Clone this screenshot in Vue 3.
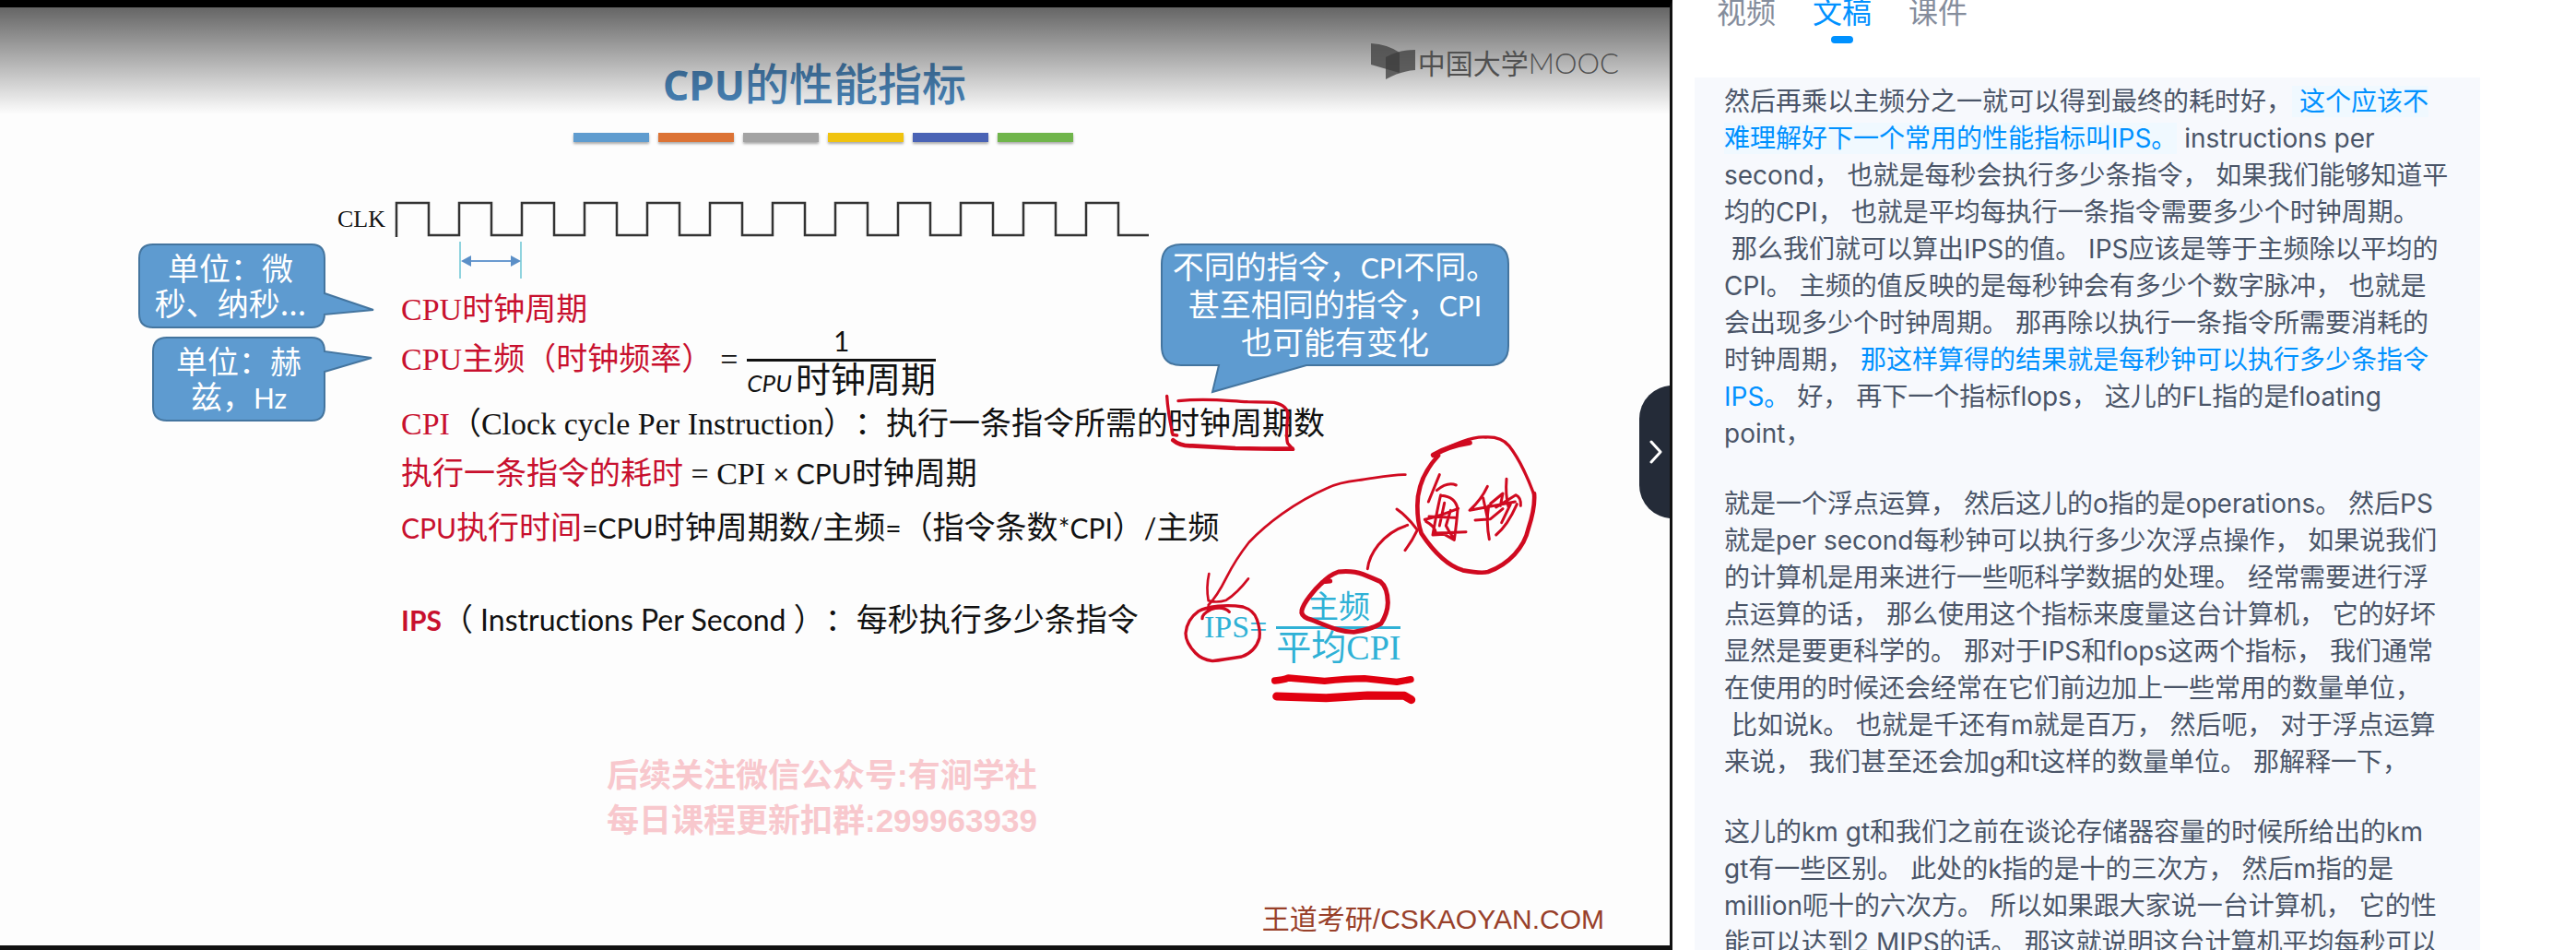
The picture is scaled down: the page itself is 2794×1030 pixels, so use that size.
<script setup>
import { ref } from 'vue'

const tabs = ['视频', '文稿', '课件']
const active = ref('文稿')

const barColors = ['#5f9ccf', '#dc7335', '#a3a3a3', '#f0c30f', '#4a63b5', '#70b54b']

const pulses = Array.from({ length: 12 }, (_, i) => 430 + i * 68)
const clockPath =
  'M430 257' + pulses.map((x) => `V220H${x + 35}V255H${x + 68}`).join('')

// Each paragraph is a list of lines; a line is a list of [text, state] runs.
const paragraphs = [
  [
    [['然后再乘以主频分之一就可以得到最终的耗时好，'], [' 这个应该不', 'current']],
    [['难理解好下一个常用的性能指标叫IPS。', 'current'], [' instructions per']],
    [['second， 也就是每秒会执行多少条指令， 如果我们能够知道平']],
    [['均的CPI， 也就是平均每执行一条指令需要多少个时钟周期。']],
    [[' 那么我们就可以算出IPS的值。 IPS应该是等于主频除以平均的']],
    [['CPI。 主频的值反映的是每秒钟会有多少个数字脉冲， 也就是']],
    [['会出现多少个时钟周期。 那再除以执行一条指令所需要消耗的']],
    [['时钟周期， '], ['那这样算得的结果就是每秒钟可以执行多少条指令', 'marked']],
    [['IPS。', 'marked'], [' 好， 再下一个指标flops， 这儿的FL指的是floating']],
    [['point，']],
  ],
  [
    [['就是一个浮点运算， 然后这儿的o指的是operations。 然后PS']],
    [['就是per second每秒钟可以执行多少次浮点操作， 如果说我们']],
    [['的计算机是用来进行一些呃科学数据的处理。 经常需要进行浮']],
    [['点运算的话， 那么使用这个指标来度量这台计算机， 它的好坏']],
    [['显然是要更科学的。 那对于IPS和flops这两个指标， 我们通常']],
    [['在使用的时候还会经常在它们前边加上一些常用的数量单位，']],
    [[' 比如说k。 也就是千还有m就是百万， 然后呃， 对于浮点运算']],
    [['来说， 我们甚至还会加g和t这样的数量单位。 那解释一下，']],
  ],
  [
    [['这儿的km gt和我们之前在谈论存储器容量的时候所给出的km']],
    [['gt有一些区别。 此处的k指的是十的三次方， 然后m指的是']],
    [['million呃十的六次方。 所以如果跟大家说一台计算机， 它的性']],
    [['能可以达到2 MIPS的话。 那这就说明这台计算机平均每秒可以']],
  ],
]
</script>

<template>
  <div class="page">
    <main class="video">
      <svg class="layer" width="1814" height="1030" viewBox="0 0 1814 1030" aria-hidden="true">
        <path :d="clockPath" fill="none" stroke="#333" stroke-width="2.5" />
        <path d="M499 262V302M565 262V302" stroke="#8fd3de" stroke-width="2" />
        <path d="M506 283H558" stroke="#6b9bd0" stroke-width="2" />
        <path d="M500 283l11-6v12zM565 283l-11-6v12z" fill="#5b8fc7" />
        <g fill="#5e9bd0" stroke="#44759f" stroke-width="2">
          <path d="M166 265H338Q352 265 352 280V318L405 336L352 341V340Q352 355 338 355H166Q151 355 151 340V280Q151 265 166 265Z" />
          <path d="M181 366H338Q352 366 352 381L403 388L352 403V441Q352 456 338 456H181Q166 456 166 441V381Q166 366 181 366Z" />
          <path d="M1281 265H1615Q1636 265 1636 286V375Q1636 396 1615 396H1417L1315 425L1322 396H1281Q1260 396 1260 375V286Q1260 265 1281 265Z" />
        </g>
      </svg>

      <header class="slide-head">
        <h1><b>CPU</b>的性能指标</h1>
        <div class="bars">
          <i v-for="c in barColors" :key="c" :style="{ background: c }"></i>
        </div>
      </header>

      <p class="clk">CLK</p>

      <section class="slide-body">
        <p class="row red serif">CPU时钟周期</p>
        <p class="row frequency serif">
          <span class="red">CPU主频（时钟频率）</span>
          <span class="equals">=</span>
          <span class="fraction">
            <span class="over sans">1</span>
            <span class="under"><em>CPU</em>时钟周期</span>
          </span>
        </p>
        <p class="row cpi serif"><span class="red">CPI</span>（Clock cycle Per Instruction）：执行一条指令所需的时钟周期数</p>
        <p class="row cost serif"><span class="red">执行一条指令的耗时</span> = CPI <span class="sans">× CPU</span>时钟周期</p>
        <p class="row time"><span class="red"><span class="sans">CPU</span>执行时间</span><span class="sans">=CPU</span>时钟周期数<span class="sans">/</span>主频<span class="sans">=</span>（指令条数<span class="sans">*CPI</span>）<span class="sans">/</span>主频</p>
        <div class="row ips">
          <p><span class="sans red semi">IPS</span>（<span class="sans full">&nbsp;Instructions Per Second&nbsp;</span>）：每秒执行多少条指令</p>
          <p class="formula serif">
            <span>IPS=</span>
            <span class="fraction">
              <span class="over">主频</span>
              <span class="under">平均CPI</span>
            </span>
          </p>
        </div>
      </section>

      <p class="promo">后续关注微信公众号:有涧学社<br />每日课程更新扣群:299963939</p>
      <p class="credit">王道考研/CSKAOYAN.COM</p>

      <p class="callout micro">单位：微<br />秒、纳秒...</p>
      <p class="callout hertz">单位：赫<br />兹，<span class="sans">Hz</span></p>
      <p class="callout differ">不同的指令，<span class="sans">CPI</span>不同。<br />甚至相同的指令，<span class="sans">CPI</span><br />也可能有变化</p>

      <svg class="layer" width="1814" height="1030" viewBox="0 0 1814 1030" aria-hidden="true">
        <g transform="translate(1260 420) scale(.33333)" fill="none" stroke="#d00a20" stroke-width="10" stroke-linecap="round" stroke-linejoin="round">
          <path d="M17 28C20 80 30 125 36 154L50 156M54 44C150 34 210 44 280 47Q340 48 366 49Q412 60 410 90C408 130 403 160 410 182L428 202" />
          <path d="M37 172Q60 192 100 190Q170 194 240 198Q320 200 425 200" stroke-width="14" />
          <path d="M793 284C750 282 690 296 640 302Q575 310 540 327C430 375 340 445 284 504Q240 560 210 620C190 660 170 690 152 708M154 606Q144 650 152 694Q180 702 210 692Q245 670 282 622" stroke-width="8" />
          <path d="M132 752Q130 738 160 722Q200 710 220 730M150 716Q210 705 265 714Q300 725 310 755Q322 790 318 815Q305 860 260 876Q200 886 165 890Q130 885 110 864Q78 830 78 800Q82 755 120 728Q140 716 180 714" />
          <path d="M670 590C675 545 715 475 800 448M765 396Q800 420 832 464Q815 500 792 530" stroke-width="9" />
          <path d="M884 220Q935 190 1002 180" stroke-width="17" />
          <path d="M884 218C950 185 1010 158 1055 162Q1105 160 1130 190C1165 235 1190 290 1212 350" />
          <path d="M900 222C860 265 832 320 832 385Q832 440 845 475C885 535 930 580 980 595Q1040 606 1062 600C1130 575 1180 520 1193 460Q1216 390 1212 345" stroke-width="14" />
          <path d="M904 284L868 372M895 335Q930 306 958 318M908 350Q898 390 882 480L920 478L952 496Q960 440 963 395Q955 355 910 352M856 430Q900 420 965 394M860 436Q890 452 892 474L990 470M920 376L904 450M940 400L925 450Q935 470 950 490M870 420L955 424" stroke-width="9" />
          <path d="M1060 322Q1040 365 1002 400L1150 372M1046 360L1060 425M1020 432L1070 428L1110 395M1064 385Q1055 440 1066 494M1122 298Q1118 350 1128 388M1070 378L1110 345L1102 385M1088 390L1152 350Q1170 358 1168 385M1156 380Q1125 450 1088 480M1106 440L1135 380" stroke-width="9" />
          <path d="M548 630L525 632C495 660 462 700 456 725Q452 742 475 752C530 770 570 795 625 796Q680 788 714 768Q735 735 736 700Q735 650 712 632Q680 618 655 608Q620 595 575 600Q545 610 520 638" stroke-width="15" />
          <path d="M368 954Q395 952 412 945Q470 950 530 955Q600 948 660 947L765 958L810 950" stroke="#e10010" stroke-width="22" />
          <path d="M374 1005L535 1010L670 1002L790 1003L812 1016" stroke="#e10010" stroke-width="27" />
        </g>
      </svg>

      <div class="shade"></div>
      <p class="brand">
        <svg width="48" height="40" viewBox="0 0 48 40" aria-hidden="true">
          <path d="M0 0Q18 1 31 10V32L0 23Z" fill="#444" fill-opacity=".8" />
          <path d="M16 15Q30 7 48 7V29Q32 30 16 39Z" fill="#3c3c3c" fill-opacity=".75" />
        </svg>
        <span>中国大学<span class="mooc">MOOC</span></span>
      </p>

      <button class="handle" type="button" aria-label="收起">
        <svg width="14" height="26" viewBox="0 0 14 26" aria-hidden="true">
          <path d="M2 2L12 13L2 24" fill="none" stroke="#fff" stroke-width="3" stroke-linecap="round" stroke-linejoin="round" />
        </svg>
      </button>
    </main>

    <aside class="panel">
      <nav class="tabs">
        <button
          v-for="t in tabs"
          :key="t"
          type="button"
          :class="{ on: t === active }"
          @click="active = t"
        >{{ t }}</button>
      </nav>
      <article class="script">
        <p v-for="(lines, p) in paragraphs" :key="p">
          <template v-for="(runs, l) in lines" :key="l"><span v-for="(run, r) in runs" :key="r" :class="run[1]">{{ run[0] }}</span><br /></template>
        </p>
      </article>
    </aside>
  </div>
</template>

<style>
body {
  margin: 0;
  background: #fff;
}
</style>

<style scoped>
.page {
  display: flex;
  height: 100vh;
  overflow: hidden;
  font-family: Inter, "Noto Sans CJK SC", sans-serif;
  text-spacing-trim: space-all;
}
p,
h1 {
  margin: 0;
}
button {
  padding: 0;
  border: 0;
  background: none;
  font: inherit;
  cursor: pointer;
}

/* video frame */
.video {
  position: relative;
  flex: 1;
  display: flex;
  flex-direction: column;
  min-width: 0;
  box-sizing: border-box;
  border: solid #111;
  border-width: 8px 3px 5px 0;
  border-top-color: #000;
  background: #fdfdfd;
  overflow: hidden;
  color: #111;
  font-family: "Noto Sans CJK SC", sans-serif;
  font-size: 34px;
  white-space: nowrap;
}
.layer {
  position: absolute;
  top: -8px;
  left: 0;
}
.slide-head {
  position: relative;
  display: flex;
  flex-direction: column;
  align-items: center;
  padding: 50px 26px 0 0;
}
h1 {
  padding-right: 18px;
  color: #4b88be;
  font: 500 48px/60px "Noto Sans CJK SC", sans-serif;
}
h1 b {
  font: 700 44px/1 "Noto Sans", sans-serif;
}
.bars {
  display: flex;
  gap: 10px;
  margin-top: 26px;
}
.bars i {
  width: 82px;
  height: 10px;
  box-shadow: 0 2px 3px #0005;
}
.clk {
  position: relative;
  margin: 68px 0 0 366px;
  font: 26px/32px "Liberation Serif", serif;
}
.slide-body {
  position: relative;
  margin: 58px 0 0 435px;
}
.row {
  line-height: 48px;
}
.serif {
  font-family: "Liberation Serif", "Noto Sans CJK SC", serif;
}
.sans {
  font-family: Lato, sans-serif;
  font-size: 30px;
  line-height: 1;
}
.full {
  font-size: 32px;
  font-variant-ligatures: none;
}
.semi {
  font-weight: 700;
}
.red {
  color: #c8102e;
}
.frequency,
.ips,
.formula {
  display: flex;
  align-items: center;
}
.frequency {
  height: 48px;
  margin-top: 6px;
}
.equals {
  margin: 0 10px 0 8px;
}
.fraction {
  display: flex;
  flex-direction: column;
  align-items: center;
}
.over,
.under {
  line-height: 40px;
}
.under {
  border-top: 3px solid currentColor;
  font-size: 38px;
}
.under em {
  margin-right: 4px;
  font-family: Lato, sans-serif;
  font-size: 26px;
  line-height: 1;
}
.cpi {
  margin-top: 22px;
}
.cost {
  margin-top: 6px;
}
.time {
  margin-top: 8px;
}
.ips {
  height: 48px;
  margin-top: 52px;
}
.ips > p:first-child {
  width: 871px;
}
.formula {
  gap: 10px;
  padding-top: 20px;
  color: #2fb1d6;
}
.promo {
  position: relative;
  margin: 122px 0 0 658px;
  color: #f8c8cd;
  font: 700 35px/49px "Liberation Sans", "Noto Sans CJK SC", sans-serif;
}
.credit {
  position: relative;
  align-self: flex-end;
  margin: auto 71px 8px 0;
  color: #98402a;
  font: 30px/40px "Liberation Sans", "Noto Sans CJK SC", sans-serif;
}
.callout {
  position: absolute;
  color: #fff;
  text-align: center;
  line-height: 38px;
}
.micro {
  top: 263px;
  left: 150px;
  width: 200px;
}
.hertz {
  top: 364px;
  left: 165px;
  width: 188px;
}
.differ {
  top: 259px;
  left: 1259px;
  width: 378px;
  line-height: 41px;
}
.shade {
  position: absolute;
  inset: 0 0 auto;
  height: 116px;
  background: linear-gradient(#0009, #0000);
}
.brand {
  position: absolute;
  top: 39px;
  right: 55px;
  display: flex;
  align-items: center;
  gap: 3px;
  color: #505050;
  font-size: 30px;
  line-height: 40px;
}
.mooc {
  font-family: Lato, sans-serif;
  font-size: 31px;
  font-weight: 300;
  line-height: 1;
}
.handle {
  position: absolute;
  top: 410px;
  right: -3px;
  display: grid;
  place-items: center;
  width: 36px;
  height: 144px;
  border-radius: 36px 0 0 36px;
  background: #242b38;
}

/* side panel */
.panel {
  flex: 0 0 980px;
  box-sizing: border-box;
  display: flex;
  flex-direction: column;
  padding: 0 104px 0 24px;
  background: #fff;
}
.tabs {
  display: flex;
  gap: 40px;
  flex: 0 0 84px;
  align-items: flex-start;
  padding-left: 24px;
}
.tabs button {
  color: #858d9c;
  font-size: 32px;
  line-height: 28px;
}
.tabs .on {
  color: #0091ff;
}
.tabs .on::after {
  content: "";
  display: block;
  width: 24px;
  height: 8px;
  margin: 11px auto 0;
  border-radius: 4px;
  background: #0091ff;
}
.script {
  flex: 1;
  min-height: 0;
  overflow: hidden;
  padding: 6px 32px 0;
  background: #f7f9fd;
  color: #4a5568;
  font-size: 28px;
  line-height: 40px;
}
.script p {
  margin-bottom: 36px;
  white-space: nowrap;
}
.script span {
  white-space: pre;
}
.current {
  background: #f0f9ff;
}
.current,
.marked {
  color: #0091ff;
}
</style>
